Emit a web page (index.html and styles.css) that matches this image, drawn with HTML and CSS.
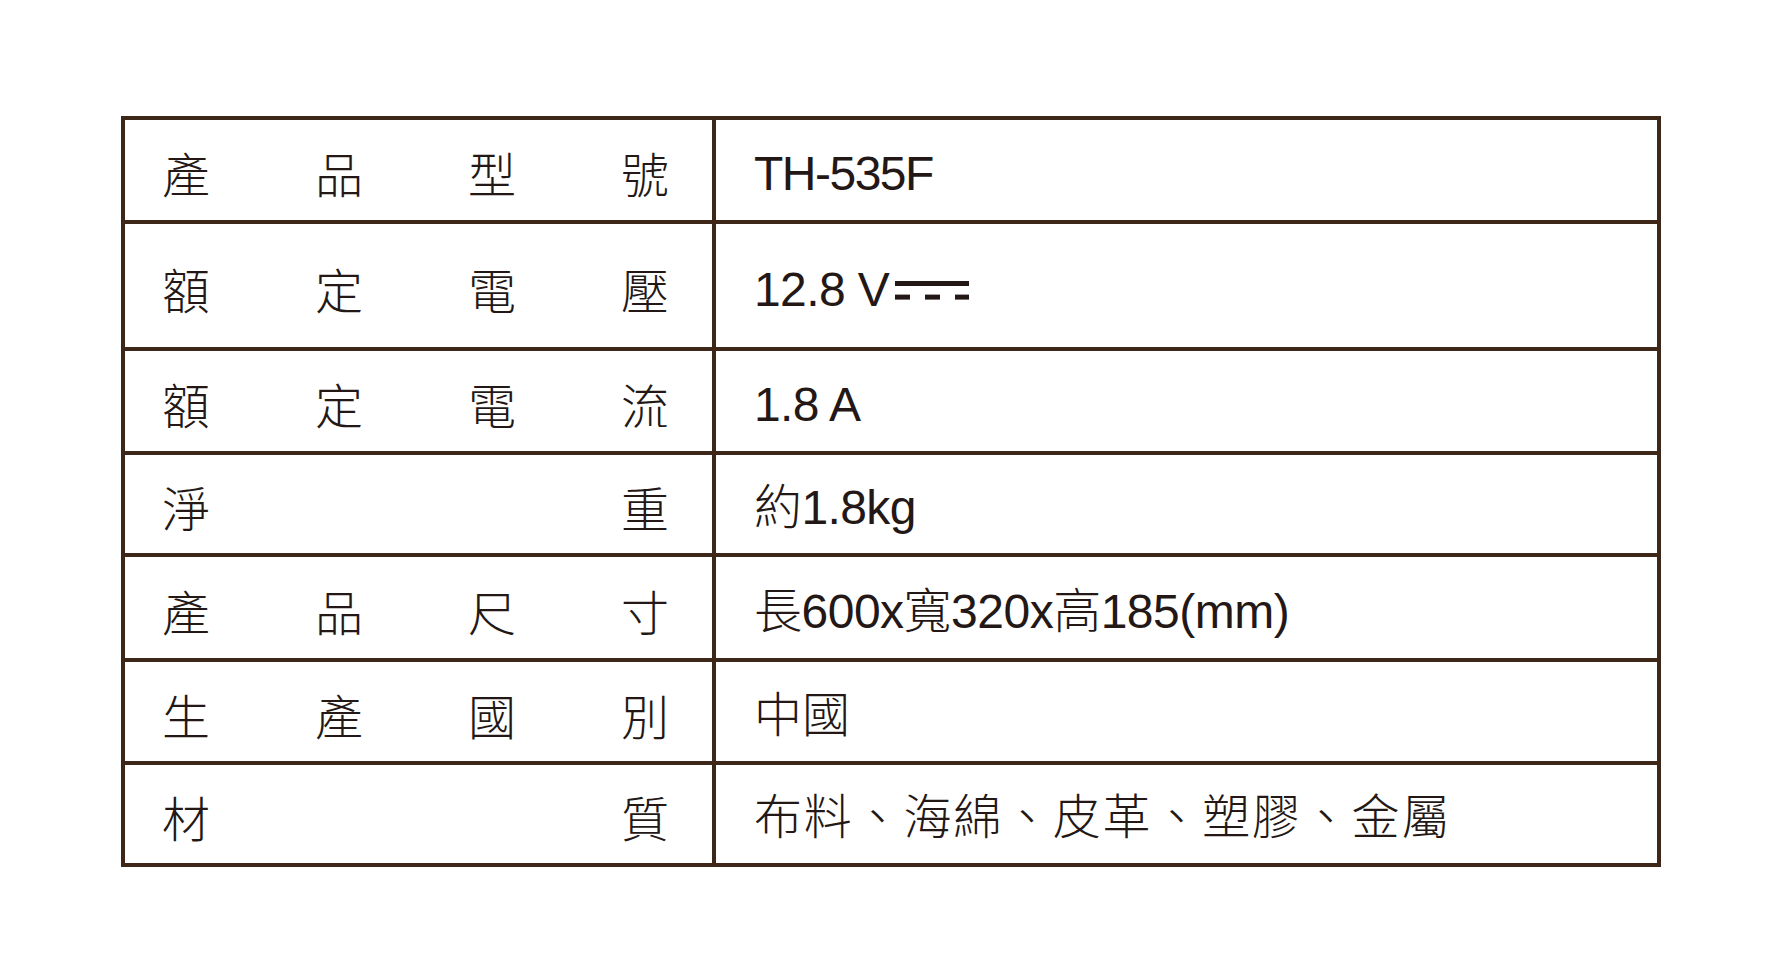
FILE: index.html
```html
<!DOCTYPE html>
<html lang="zh-Hant">
<head>
<meta charset="utf-8">
<title>產品規格</title>
<link rel="stylesheet" href="styles.css">
</head>
<body>
<div class="spec">
  <div class="row r1">
    <div class="label"><span>產</span><span>品</span><span>型</span><span>號</span></div>
    <div class="value"><span class="model">TH-535F</span></div>
  </div>
  <div class="row r2">
    <div class="label"><span>額</span><span>定</span><span>電</span><span>壓</span></div>
    <div class="value"><span class="tight">12.8 V</span><svg class="dc" width="74" height="19" viewBox="0 0 74 19" aria-hidden="true"><rect x="0" y="0" width="74" height="5"/><rect x="0" y="13.6" width="15" height="5"/><rect x="30" y="13.6" width="15" height="5"/><rect x="60" y="13.6" width="14" height="5"/></svg></div>
  </div>
  <div class="row r3">
    <div class="label"><span>額</span><span>定</span><span>電</span><span>流</span></div>
    <div class="value"><span class="tight">1.8 A</span></div>
  </div>
  <div class="row r4">
    <div class="label"><span>淨</span><span>重</span></div>
    <div class="value"><span class="weight">約1.8kg</span></div>
  </div>
  <div class="row r5">
    <div class="label"><span>產</span><span>品</span><span>尺</span><span>寸</span></div>
    <div class="value"><span class="dims">長600x寬320x高185(mm)</span></div>
  </div>
  <div class="row r6">
    <div class="label"><span>生</span><span>產</span><span>國</span><span>別</span></div>
    <div class="value"><span>中國</span></div>
  </div>
  <div class="row r7">
    <div class="label"><span>材</span><span>質</span></div>
    <div class="value"><span class="materials">布料、海綿、皮革、塑膠、金屬</span></div>
  </div>
</div>
</body>
</html>
```
FILE: styles.css
```css
*, *::before, *::after {
  box-sizing: border-box;
}

html, body {
  margin: 0;
  padding: 0;
  background: #ffffff;
}

body {
  width: 1779px;
  height: 976px;
  overflow: hidden;
}

.spec {
  margin: 116px 0 0 121px;
  width: 1540px;
  border: 4px solid #3d2718;
  color: #231815;
}

.row {
  display: grid;
  grid-template-columns: 591px 1fr;
  height: 104px;
  border-bottom: 4px solid #3d2718;
}

.row.r2 { height: 127px; }
.row.r4 { height: 102px; }
.row.r5 { height: 105px; }
.row.r6 { height: 103px; }
.row.r7 { height: 98px; border-bottom: none; }

.label {
  display: flex;
  justify-content: space-between;
  align-items: center;
  padding: 4px 43px 0 37px;
  border-right: 4px solid #3d2718;
  font-family: "Noto Sans CJK TC", "Noto Sans CJK SC", sans-serif;
  font-size: 48px;
  font-weight: 300;
  line-height: 48px;
}

.value {
  display: flex;
  align-items: center;
  padding: 8px 0 0 38px;
  font-family: "Liberation Sans", "Noto Sans CJK TC", sans-serif;
  font-size: 48px;
  font-weight: 300;
  line-height: 56px;
  white-space: nowrap;
}

.model {
  letter-spacing: -1.5px;
}

.tight {
  letter-spacing: -0.6px;
}

.weight {
  letter-spacing: -0.6px;
}

.dims {
  letter-spacing: -0.5px;
}

.materials {
  letter-spacing: 1.8px;
}

.dc {
  margin-left: 6px;
  margin-top: 1px;
  fill: #231815;
  flex: none;
}
```
